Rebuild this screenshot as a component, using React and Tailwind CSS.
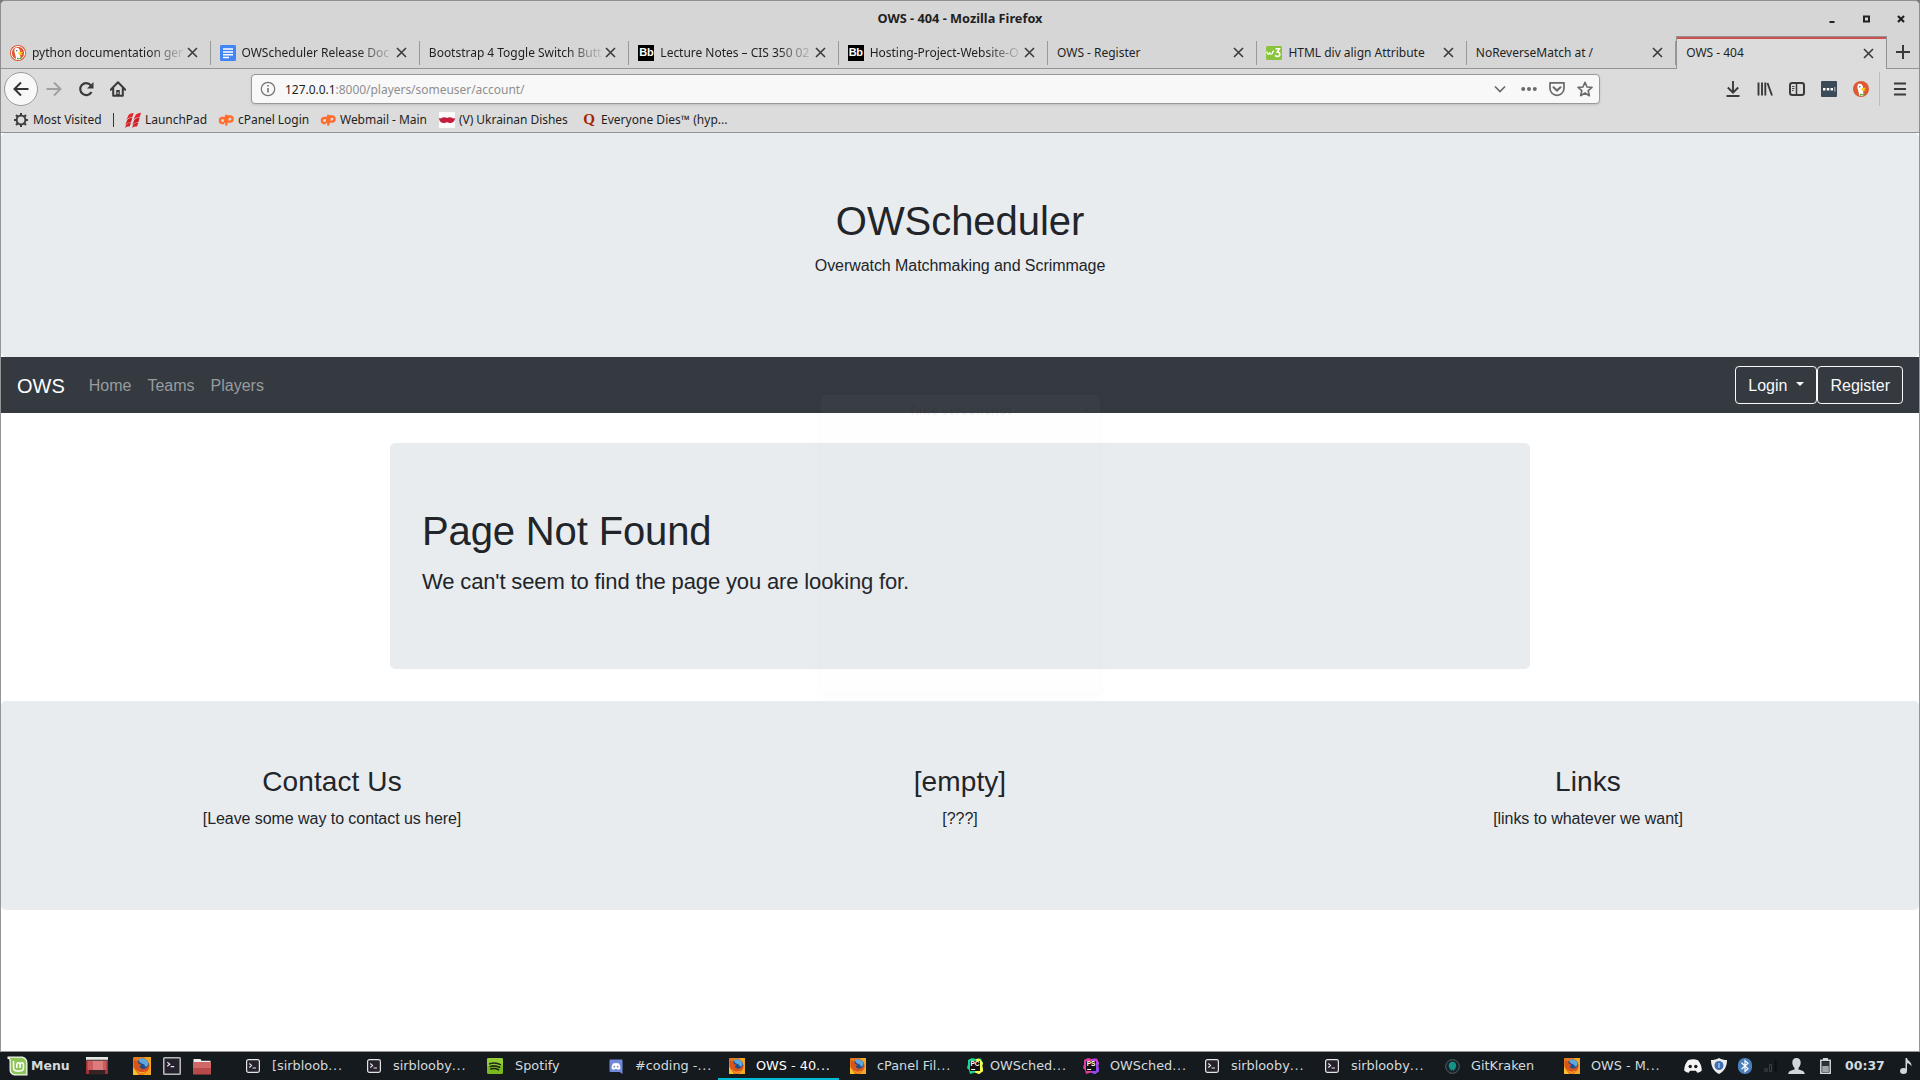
import React from "react";

const S = ({ w = 16, h, vb, className = "", children }) => (
  <svg
    width={w}
    height={h || w}
    viewBox={vb || "0 0 16 16"}
    fill="none"
    className={"shrink-0 " + className}
  >
    {children}
  </svg>
);

/* ---------- favicons ---------- */
const Duck = ({ ring }) => (
  <S>
    <circle cx="8" cy="8" r="8" fill="#de5833" />
    {ring && <circle cx="8" cy="8" r="6.6" stroke="#fff" strokeWidth="1" />}
    <path d="M5 3.2c1.6-1 4.3-.4 4.8 2 .3 1.500.1 2.500.3 4.200l.5 4.900C8.800 15.300 7 15 6.200 14.500 6 11 4.200 7.500 4.300 5.500z" fill="#fff" />
    <circle cx="6.800" cy="5.800" r=".7" fill="#2d4f8e" />
    <path d="M8.500 7.200c1.500-.7 3.500-.7 4.500-.1-.5.9-1.500 1-2 1.300 1 .4 1.500.5 1.700.9-1.200.9-3.200.9-4.300 0z" fill="#fdd20a" />
    <path d="M7 12.500l2 .8 2.500-.9v2.100l-2.200-.4L7 14.800z" fill="#4cba3c" />
  </S>
);
const Docs = () => (
  <S>
    <rect width="16" height="16" rx="1.300" fill="#4285f4" />
    <path d="M3 4h10M3 7h10M3 9.800h10M3 12.500h6" stroke="#fff" strokeWidth="1.500" />
  </S>
);
const Bb = () => (
  <span className="flex h-4 w-4 shrink-0 items-center justify-center bg-black font-['Liberation_Sans'] text-[11px] font-bold tracking-tight text-white">
    Bb
  </span>
);
const W3 = () => (
  <S>
    <rect y="1" width="16" height="14" rx="1.500" fill="#8ac43f" />
    <path d="M1 6.500c0 3.300 2.300 3.300 2.700.8.300 2.500 2.800 2.500 3-.3.100-1 .8-1.200 1.500-.5" stroke="#fff" strokeWidth="1.300" />
    <path d="M9.500 3.800h3.800L11.300 7c3-.3 3.600 4.500.3 4.500-1.200 0-2-.6-2.300-1.600" stroke="#fff" strokeWidth="1.600" />
  </S>
);

const Close = () => (
  <S w={11} vb="0 0 11 11">
    <path d="M1 1l9 9M10 1l-9 9" stroke="#3c3c3c" strokeWidth="1.600" />
  </S>
);

const TABS = [
  ["python documentation gen", <Duck ring />],
  ["OWScheduler Release Doc", <Docs />],
  ["Bootstrap 4 Toggle Switch Butt", null],
  ["Lecture Notes – CIS 350 02", <Bb />],
  ["Hosting-Project-Website-O", <Bb />],
  ["OWS - Register", null],
  ["HTML div align Attribute", <W3 />],
  ["NoReverseMatch at /", null],
];

const Tab = ({ title, icon, fade }) => (
  <div className="flex h-8 w-[209.500px] items-center pl-[9px] pt-px">
    {icon && <span className="mr-[6px]">{icon}</span>}
    <span
      className={
        "min-w-0 flex-1 overflow-hidden whitespace-nowrap tracking-[-0.02px] " +
        (fade ? "[mask-image:linear-gradient(to_right,black_calc(100%-34px),transparent_calc(100%+4px))]" : "")
      }
    >
      {title}
    </span>
    <span className="ml-[4px] mr-[12px]">
      <Close />
    </span>
    <span className="h-6 w-px bg-[#999]" />
  </div>
);

/* ---------- bookmark icons ---------- */
const Gear = () => (
  <S>
    <circle cx="8" cy="8" r="4.400" stroke="#3c3c3c" strokeWidth="2" />
    <path d="M8 1v3M8 12v3M1 8h3M12 8h3M3 3l2.200 2.200M10.800 10.800L13 13M13 3l-2.200 2.200M5.200 10.800L3 13" stroke="#3c3c3c" strokeWidth="2" />
  </S>
);
const Launch = () => (
  <S>
    <path d="M3.500 3.200C5 1 6.500 1.500 8.600 1L7.300 5.200C5 5.400 3.500 5.500 1.300 8zM10.500 3.200C12 1 13.500 1.500 16 .800L14.700 5.200C12.500 5.400 10.500 5.500 8.300 8z" fill="#e2252b" />
    <path d="M2.300 8C4 5.800 5.500 6.300 7.300 5.800L6 10.200C4 10.400 2.500 10.500.3 12.700zM9.300 8C11 5.800 12.500 6.300 14.700 5.800L13.300 10.200C11 10.400 9.500 10.500 7.300 12.700z" fill="#c81d24" />
    <path d="M1.300 12.300C3 10.500 4.500 11 6 10.700L4.600 14.600C3 14.500 1.500 14.800 0 16zM8.300 12.300C10 10.500 11.500 11 13.400 10.700L12 14.600C10 14.500 8.500 14.800 7 16z" fill="#d9232a" />
  </S>
);
const CP = () => (
  <S>
    <path d="M7 6H4.500a2.600 2.600 0 0 0 0 5.200H6M8 13.500l2-9h2a2.500 2.500 0 0 1 0 5.200h-2.500M8.500 2.800L6.500 11" stroke="#ff6c2c" strokeWidth="2.300" />
  </S>
);
const Mustache = () => (
  <S>
    <rect width="16" height="16" fill="#fafafa" />
    <path d="M0 6c2 1.500 3-1 5.500-.7C7 5.400 7.500 6 8 6s1-.6 2.500-.7C13 5 14 7.500 16 6c0 4-3.500 5.200-5.500 5-1.500-.1-2-.7-2.500-.7s-1 .6-2.500.7C3.500 11.200 0 10 0 6z" fill="#c41d3e" />
  </S>
);
const Quora = () => (
  <span className="flex h-4 w-4 items-center justify-center font-['Liberation_Serif'] text-[15px] font-bold text-[#a82400]">
    Q
  </span>
);

const BOOKMARKS = [
  ["LaunchPad", <Launch />, "w-[93px]"],
  ["cPanel Login", <CP />, "w-[102px]"],
  ["Webmail - Main", <CP />, "w-[119px]"],
  ["(V) Ukrainan Dishes", <Mustache />, "w-[142px]"],
  ["Everyone Dies™ (hyp...", <Quora />, "w-[160px]"],
];

/* ---------- taskbar icons ---------- */
const Fox = ({ w = 16 }) => (
  <S w={w} vb="0 0 16 16">
    <rect width="16" height="16" rx="1" fill="#e8781c" />
    <path d="M0 9l5 7H0zM13 0h3v7z" fill="#f9c22b" />
    <path d="M10 0h6v16H9c5-3 6-9 1-16z" fill="#f5a623" />
    <circle cx="8.500" cy="7" r="5.600" fill="#1d4f8f" />
    <path d="M5 2c3-2 8 0 8.500 3.500.3 2-1.500 3.500-3 3 .5-1.500-.5-2-2-2.500S5.500 5 5 2z" fill="#5fa8dc" />
    <path d="M1 2c1 1.500 2.500 1.300 4 1.700L4.500 5.500 7.500 7 5.800 8.500c1 2.500 4 2.500 6 1.200 1.200-.8 2-2 2.700-3.500.8 4.500-2 8.300-6.500 8.300C3 14.500 0 10 1 2z" fill="#d9541a" />
    <path d="M2 10c2 3.500 6 4.800 10 2.500-2 3-7.500 3.500-10-2.500z" fill="#f7b32b" />
  </S>
);
const Term = ({ w = 14, big }) => (
  <S w={w} vb="0 0 14 14">
    <rect x=".6" y=".6" width="12.800" height="12.800" rx={big ? 0.6 : 1.8} fill="#25222e" stroke={big ? "#b9b9b9" : "#e4e4e4"} strokeWidth="1.200" />
    {big ? (
      <path d="M3.300 4l2 1.600-2 1.600M6 7.500h2.700" stroke="#e8e8e8" strokeWidth=".9" />
    ) : (
      <path d="M3.300 4.500L5.600 6.500 3.300 8.500M6.500 9h3.500" stroke="#e8e8e8" strokeWidth="1.100" />
    )}
  </S>
);
const Mint = () => (
  <S w={21} h={20} vb="0 0 21 20">
    <path d="M.5.5H14c4 0 6.500 2.500 6.500 6.500v12.500H8.500c-4 0-6-2.500-6-6V5C2.500 3.500 2 3 .5 3z" fill="#f1f5ec" />
    <path d="M2 1.800h11.500c3.500 0 5.700 2 5.700 5.700v10.700H9c-3.500 0-5.200-2-5.200-5V5C3.800 3.300 3.300 2.500 2 1.800z" fill="#8dc657" />
    <path d="M6.500 5v6.500c0 2.500 1.300 3.500 3.500 3.500h3c2.300 0 3.500-1 3.500-3.500V9c0-1.500-.7-2.200-1.700-2.200S13.100 7.500 13.100 9v3M13.100 9c0-1.500-.7-2.200-1.600-2.200S9.800 7.500 9.800 9v3" stroke="#fff" strokeWidth="1.500" />
  </S>
);
const Desk = () => (
  <S w={22} h={18} vb="0 0 22 18">
    <rect y=".5" width="22" height="16.500" fill="#9d3337" />
    <rect x="1.500" y="4" width="19" height="9" fill="#cb5c5e" />
    <rect x="7" y="4" width="10" height="9" fill="#dc7c7c" />
    <rect y="0" width="22" height="3" fill="#e6e6e6" />
    <path d="M0 3.200h22" stroke="#555" />
    <rect x="3" y="13" width="16" height="4.500" fill="#372225" />
  </S>
);
const Folder = () => (
  <S w={18} h={17} vb="0 0 18 17">
    <path d="M.5 1h7l1 1.800h9V6H.5z" fill="#ececec" />
    <rect y="4" width="18" height="12.500" fill="#b94a4a" />
    <rect y="4" width="18" height="6" fill="#d06868" />
  </S>
);
const Spotify = () => (
  <S>
    <rect width="16" height="16" rx="1.500" fill="#7ab81e" />
    <rect width="16" height="8" rx="1.500" fill="#93cc38" />
    <path d="M2.700 5.800c3.500-1.300 7.500-1 10.800.8M3.200 8.500c3-1 6.300-.8 9.300.8M3.800 11c2.700-.8 5-.6 7.700.8" stroke="#1c2a10" strokeWidth="1.600" strokeLinecap="round" />
  </S>
);
const DiscordSq = () => (
  <S w={14} h={15} vb="0 0 14 15">
    <path d="M1.500.5h11a1 1 0 0 1 1 1V15l-3-2h-9a1 1 0 0 1-1-1V1.500a1 1 0 0 1 1-1z" fill="#7289da" />
    <path d="M4 4.500c2-.8 4-.8 6 0 1 1.500 1.500 3.500 1.300 5.200-.8.700-1.600 1-2.500 1L8.200 10H5.800l-.6.700c-1 0-1.800-.4-2.500-1C2.500 8 3 6 4 4.500z" fill="#fff" />
    <circle cx="5.300" cy="7.700" r=".9" fill="#7289da" />
    <circle cx="8.700" cy="7.700" r=".9" fill="#7289da" />
  </S>
);
const JB = ({ a, b, c, t }) => (
  <span className="relative flex h-4 w-4 shrink-0 items-center justify-center">
    <S className="absolute inset-0">
      <path d="M1 2l4-2 4 1 5-.5L16 5l-1 3 1 5-4 3-4-1.500L3 16l-1-4-2-2 1-4z" fill={a} />
      <path d="M9 1l3-.5L16 5l-1 3 1 5-4 3z" fill={b} />
      <path d="M8 13l7-7 1 7-4 3-4-1.500z" fill={c} />
      <rect x="3" y="3" width="10" height="10" fill="#111" />
      <path d="M4.200 11.500h4" stroke="#fff" />
    </S>
    <span className="relative mb-[3px] font-['Liberation_Sans'] text-[6.500px] font-bold leading-none text-white">{t}</span>
  </span>
);
const Kraken = () => (
  <S w={15}>
    <circle cx="8" cy="8" r="7.300" fill="#15232b" stroke="#596469" />
    <path d="M8 3c2.500 0 4 2 4 4.500 0 1-.8 1.500-1 2.500l-.5 2-1-1.500V13L8 11l-1.500 2v-2.500l-1 1.500L5 10c-.2-1-1-1.500-1-2.500C4 5 5.500 3 8 3z" fill="#179287" />
  </S>
);

const TASKS = [
  ["[sirbloob...", <Term />, "w-[121px]", "gap-[12px]"],
  ["sirblooby...", <Term />, "w-[120px]", "gap-[12px]"],
  ["Spotify", <Spotify />, "w-[122px]", "gap-[12px]"],
  ["#coding -...", <DiscordSq />, "w-[120px]", "gap-[12px]"],
  ["OWS - 40...", <Fox />, "w-[121px]", "gap-[11px]"],
  ["cPanel Fil...", <Fox />, "w-[117px]", "gap-[11px]"],
  ["OWSched...", <JB a="#21d789" b="#fcf84a" c="#fcf84a" t="PC" />, "w-[116px]", "gap-[7px]"],
  ["OWSched...", <JB a="#e83aa0" b="#a94bf0" c="#8a4cf0" t="PS" />, "w-[122px]", "gap-[11px]"],
  ["sirblooby...", <Term />, "w-[120px]", "gap-[12px]"],
  ["sirblooby...", <Term />, "w-[120px]", "gap-[12px]"],
  ["GitKraken", <Kraken />, "w-[119px]", "gap-[11px]"],
  ["OWS - M...", <Fox />, "w-[119px]", "gap-[11px]"],
];

const Cell = ({ className, children }) => (
  <span className={"flex shrink-0 items-center justify-center " + className}>{children}</span>
);

const Browser = () => (
  <div className="rounded-t-[5px] border border-b-0 border-[#8f8f8f] bg-[#d6d6d6] font-['Noto_Sans',sans-serif] text-[12px] text-[#1f1f1f]">
    <div className="grid h-[35px] grid-cols-[1fr_auto_1fr] items-center">
      <span />
      <span className="text-[12.750px] font-bold">OWS - 404 - Mozilla Firefox</span>
      <div className="flex justify-end pr-[11px]">
        <Cell className="w-[35px]">
          <S w={10} vb="0 0 10 10"><path d="M2.500 8h5" stroke="#222" strokeWidth="2" /></S>
        </Cell>
        <Cell className="w-[35px]">
          <S w={10} vb="0 0 10 10"><rect x="2" y="2.500" width="5" height="5" stroke="#222" strokeWidth="2" /></S>
        </Cell>
        <Cell className="w-[14px] ml-[10px]">
          <S w={10} vb="0 0 10 10"><path d="M2 2l6 6M8 2l-6 6" stroke="#222" strokeWidth="2.200" /></S>
        </Cell>
      </div>
    </div>
    <div className="flex h-[33px] items-end border-b border-[#939393]">
      {TABS.map(([title, icon], i) => (
        <Tab key={title} title={title} icon={icon} fade={i < 5} />
      ))}
      <div className="-mb-px flex h-[33px] w-[211px] flex-col border-x border-t border-[#939393] bg-[#dcdcdc]">
        <div className="h-[2px] bg-[#cc5150]" />
        <div className="flex flex-1 items-center pb-[2px] pl-[9px] pr-[12px]">
          <span className="flex-1">OWS - 404</span>
          <Close />
        </div>
      </div>
      <Cell className="h-8 w-[32px]">
        <S w={14} vb="0 0 14 14"><path d="M7 0v14M0 7h14" stroke="#3a3a3a" strokeWidth="2" /></S>
      </Cell>
    </div>
    <div className="bg-[#dcdcdc]">
      <div className="flex h-[40px] items-center pl-[3px]">
        <span className="flex h-[34px] w-[34px] items-center justify-center rounded-full border border-[#9a9a9a] bg-[#f8f8f8]">
          <S><path d="M15.500 8H1.500M8 1.500L1.500 8 8 14.500" stroke="#333" strokeWidth="2" /></S>
        </span>
        <Cell className="w-[32px]">
          <S><path d="M.5 8h14M8 1.500L14.500 8 8 14.500" stroke="#a0a0a0" strokeWidth="1.900" /></S>
        </Cell>
        <Cell className="w-[32px]">
          <S>
            <path d="M12.800 4.200A6 6 0 1 0 13.500 11" stroke="#3a3a3a" strokeWidth="2.200" />
            <path d="M15.500 1v6.500H9z" fill="#3a3a3a" />
          </S>
        </Cell>
        <Cell className="w-[32px]">
          <S>
            <path d="M.7 8.700L8 1.300l7.300 7.400M3.200 7.500v7.300h9.600V7.500" stroke="#3a3a3a" strokeWidth="2" strokeLinejoin="round" strokeLinecap="round" />
            <path d="M6.200 9h3.600v6H6.200z" fill="#3a3a3a" />
            <path d="M8 11v2" stroke="#dcdcdc" strokeWidth="1" />
          </S>
        </Cell>
        <div className="ml-[117px] flex h-[30px] w-[1349px] items-center rounded-[4px] border border-[#989898] bg-[#f8f8f8] shadow-sm">
          <S className="ml-[8px]">
            <circle cx="8" cy="8" r="6.700" stroke="#737373" strokeWidth="1.200" />
            <path d="M8 7v4.500M8 4v1.600" stroke="#737373" strokeWidth="1.600" />
          </S>
          <span className="ml-[9px] flex-1 pt-px text-[12px] tracking-[-0.03px] text-[#8f8f8f]">
            <span className="text-[#1f1f1f]">127.0.0.1</span>:8000/players/someuser/account/
          </span>
          <Cell className="w-[29px]">
            <S><path d="M3 5.500l5 5 5-5" stroke="#6a6a6a" strokeWidth="1.700" /></S>
          </Cell>
          <Cell className="w-[29px]">
            <S><circle cx="2.200" cy="8" r="2" fill="#6a6a6a" /><circle cx="8" cy="8" r="2" fill="#6a6a6a" /><circle cx="13.800" cy="8" r="2" fill="#6a6a6a" /></S>
          </Cell>
          <Cell className="w-[28px]">
            <S>
              <path d="M1 1.800h14v5.500a7 7 0 0 1-14 0z" stroke="#6a6a6a" strokeWidth="1.700" strokeLinejoin="round" />
              <path d="M4.500 6.300L8 9.600l3.500-3.300" stroke="#6a6a6a" strokeWidth="2" strokeLinecap="round" />
            </S>
          </Cell>
          <Cell className="w-[28px]">
            <S><path d="M8 1.300l2 4.700 5 .4-3.800 3.300 1.200 5L8 12l-4.400 2.700 1.200-5L1 6.400 6 6z" stroke="#6a6a6a" strokeWidth="1.600" strokeLinejoin="round" /></S>
          </Cell>
        </div>
        <div className="ml-[117px] flex items-center">
          <Cell className="w-[32px]">
            <S><path d="M8 0v11.500M2.800 6.500L8 11.700l5.200-5.200" stroke="#3a3a3a" strokeWidth="1.900" /><path d="M1.500 15h13" stroke="#3a3a3a" strokeWidth="2" /></S>
          </Cell>
          <Cell className="w-[32px]">
            <S><path d="M1.500 1.500v13M5 1.500v13M8.300 1.500v13M10.500 2l4.500 12.500" stroke="#3a3a3a" strokeWidth="1.900" /></S>
          </Cell>
          <Cell className="w-[32px]">
            <S>
              <rect x="1" y="2" width="14" height="12" rx="2.300" stroke="#3a3a3a" strokeWidth="2" />
              <path d="M7.500 2v12" stroke="#3a3a3a" strokeWidth="1.500" />
              <path d="M3 5.500h2.500M3 7.500h2.500M3 9.500h1.700" stroke="#3a3a3a" strokeWidth=".9" />
            </S>
          </Cell>
          <Cell className="w-[32px]">
            <S>
              <rect width="16" height="16" rx="1" fill="#3a4a56" />
              <path d="M2 7h2.500v2.400H2zM5.800 7h2.500v2.400H5.800zM9.600 7H12v2.400H9.600z" fill="#fff" />
              <path d="M13.800 6v4.500" stroke="#d0d4d8" strokeWidth=".9" />
            </S>
          </Cell>
          <Cell className="w-[32px]"><Duck /></Cell>
          <span className="ml-[2px] h-[34px] w-px bg-[#bcbcbc]" />
          <Cell className="ml-[5px] w-[30px]">
            <S><path d="M2 2.500h12M2 8h12M2 13.500h12" stroke="#3a3a3a" strokeWidth="2" /></S>
          </Cell>
        </div>
      </div>
      <div className="flex h-[24px] items-center border-b border-[#939393] pl-[12px] pb-[2px] tracking-[-0.040px]">
        <Gear />
        <span className="ml-[4px] w-[80px] whitespace-nowrap">Most Visited</span>
        <span className="mr-[11px] h-[14px] w-px bg-[#333]" />
        {BOOKMARKS.map(([name, icon, w], i) => (
          <span
            key={name}
            className={"flex shrink-0 items-center gap-[4px] whitespace-nowrap " + w + (i === 4 ? " tracking-[0.020px]" : "")}
          >
            {icon}
            {name}
          </span>
        ))}
      </div>
    </div>
  </div>
);

const Page = () => (
  <div className="relative flex-1 border-x border-b border-[#959595] bg-white font-['Liberation_Sans',sans-serif] text-base text-[#212529]">
    <header className="rounded-[5px] bg-[#e9ecef] px-8 py-16 text-center">
      <h1 className="mb-2 text-[40px] leading-[48px] tracking-[-0.060px]">OWScheduler</h1>
      <p className="mb-[15px] pt-px tracking-[-0.060px]">Overwatch Matchmaking and Scrimmage</p>
    </header>
    <nav className="flex h-14 items-center bg-[#343a40] px-4 pt-px">
      <span className="mr-4 text-[20px] text-white">OWS</span>
      <div className="flex text-[#999c9f]">
        <span className="px-2">Home</span>
        <span className="px-2">Teams</span>
        <span className="px-2">Players</span>
      </div>
      <div className="-mt-px ml-auto flex text-[#f8f9fa]">
        <button className="flex h-[38px] items-center rounded-[4px] border border-[#f8f9fa] px-3 pt-px">
          Login
          <span className="ml-[9px] mb-[3px] border-x-[4.800px] border-t-[4.800px] border-x-transparent border-t-[#f8f9fa]" />
        </button>
        <button className="h-[38px] rounded-[4px] border border-[#f8f9fa] px-3 pt-[2px]">Register</button>
      </div>
    </nav>
    <main className="mx-auto mb-8 mt-[30px] h-[226px] w-[1140px] rounded-[5px] bg-[#e9ecef] px-8 py-16">
      <h1 className="mb-2 text-[40px] leading-[48px] tracking-[-0.140px]">Page Not Found</h1>
      <p className="text-[22px] leading-[37px] tracking-[-0.140px]">We can't seem to find the page you are looking for.</p>
    </main>
    <footer className="grid h-[209px] grid-cols-3 rounded-[5px] bg-[#e9ecef] px-[17px] py-16 text-center">
      {[
        ["Contact Us", "[Leave some way to contact us here]"],
        ["[empty]", "[???]"],
        ["Links", "[links to whatever we want]"],
      ].map(([t, p]) => (
        <section key={t}>
          <h3 className="mb-2 text-[28px] leading-[33.600px] tracking-[0.100px]">{t}</h3>
          <p className="tracking-[-0.060px]">{p}</p>
        </section>
      ))}
    </footer>
    {/* fading dialog window */}
    <div className="absolute left-[820px] top-[262px] h-[298px] w-[279px] rounded-t-[5px] bg-[#e4d8dc]/[0.028] pt-[6px] shadow-[0_2px_9px_2px_rgba(0,0,0,0.018)]">
      <div className="relative text-center font-['Noto_Sans',sans-serif] text-[12.750px] font-bold text-black/[0.06]">
        Take Screenshot
        <span className="absolute right-[10px] top-0">×</span>
      </div>
    </div>
  </div>
);

const Taskbar = () => (
  <div className="flex h-[28px] items-center bg-[#151a1e] font-['DejaVu_Sans',sans-serif] text-[12.500px] text-[#d3dadd]">
    <div className="flex w-[246px] shrink-0 items-center pl-[7px]">
      <Mint />
      <span className="ml-[3px] w-[55px] font-bold">Menu</span>
      <Desk />
      <span className="ml-[25px]"><Fox w={18} /></span>
      <span className="ml-[12px]"><Term w={18} big /></span>
      <span className="ml-[12px]"><Folder /></span>
    </div>
    {TASKS.map(([name, icon, w, gap], i) => (
      <div key={i} className={"relative flex h-full shrink-0 items-center whitespace-nowrap text-[12.850px] " + w + " " + gap + (i === 4 ? " text-white" : "")}>
        {icon}
        <span>
          {name.replace("...", "")}
          {name.endsWith("...") && <span className="tracking-[0.800px]">...</span>}
        </span>
        {i === 4 && <span className="absolute bottom-0 -left-[11px] h-[2px] w-[121px] bg-[#00bcd4]" />}
      </div>
    ))}
    <S w={18} h={14} vb="0 0 18 14" className="ml-px">
      <path d="M4 1.200C7.500-.2 10.500-.2 14 1.200c2.500 3 4 7 3.700 10.500-1.500 1.300-3 1.900-4.500 2l-1.200-1.900H6l-1.200 1.900c-1.500-.1-3-.7-4.500-2C0 8.200 1.500 4.200 4 1.200z" fill="#f5f5f5" />
      <circle cx="6.200" cy="7.500" r="1.700" fill="#151a1e" />
      <circle cx="11.800" cy="7.500" r="1.700" fill="#151a1e" />
    </S>
    <S className="ml-[9px]">
      <path d="M8 0c2.500 1.500 5 2 8 2 0 7-3 11.500-8 14C3 13.500 0 9 0 2c3 0 5.500-.5 8-2z" fill="#ececec" />
      <circle cx="8" cy="7.500" r="4.500" fill="#3f6fb0" />
      <path d="M8 5v5" stroke="#9fc0ea" strokeWidth="1.500" />
    </S>
    <S w={14} h={16} vb="0 0 14 16" className="ml-[11px]">
      <rect width="14" height="16" rx="6.500" fill="#4a80bd" />
      <path d="M3.500 4.800l6.500 6-3 2.700v-11l3 2.700-6.500 6" stroke="#fff" strokeWidth="1.200" />
    </S>
    <S w={14} h={12} vb="0 0 14 12" className="ml-[12px]">
      <path d="M.5 8.500h3v3h-3z" fill="#2c3033" stroke="#30353a" />
      <path d="M5.500 4.500h2v7h-2z" stroke="#3a3f44" />
      <path d="M10.500.5h2v11h-2z" fill="#0b0d0f" />
    </S>
    <S w={17} h={16} vb="0 0 17 16" className="ml-[10px]">
      <path d="M8.500 0c2.800 0 4.200 2 4.200 4.500S11.500 9 10.500 10v1.500c2.500.8 6 1.200 6.300 4.500H.2c.3-3.300 3.800-3.700 6.300-4.500V10c-1-1-2.200-3-2.200-5.500S5.700 0 8.500 0z" fill="#d0d7da" />
    </S>
    <S w={11} h={16} vb="0 0 11 16" className="ml-[15px]">
      <rect x="3" width="5" height="3" fill="#d0d7da" />
      <rect x=".8" y="2.300" width="9.400" height="13" fill="#151a1e" stroke="#d0d7da" strokeWidth="1.500" />
      <rect x="2.200" y="4" width="6.600" height="4" fill="#333" />
      <rect x="2.200" y="8" width="6.600" height="6" fill="#9ea5a8" />
    </S>
    <span className="ml-[14px] w-[55px] font-bold">00:37</span>
    <S w={12} h={16} vb="0 0 12 16">
      <ellipse cx="3.500" cy="13" rx="3.500" ry="3" fill="#d0d7da" />
      <path d="M5.500 0h1.500c.5 3 5 3.500 4.500 8.500-.8-2-2.500-3-4.500-3.200V13H5.500z" fill="#d0d7da" />
    </S>
  </div>
);

export default function App() {
  return (
    <div className="flex h-[1080px] w-[1920px] flex-col overflow-hidden bg-[#777]">
      <Browser />
      <Page />
      <Taskbar />
    </div>
  );
}
